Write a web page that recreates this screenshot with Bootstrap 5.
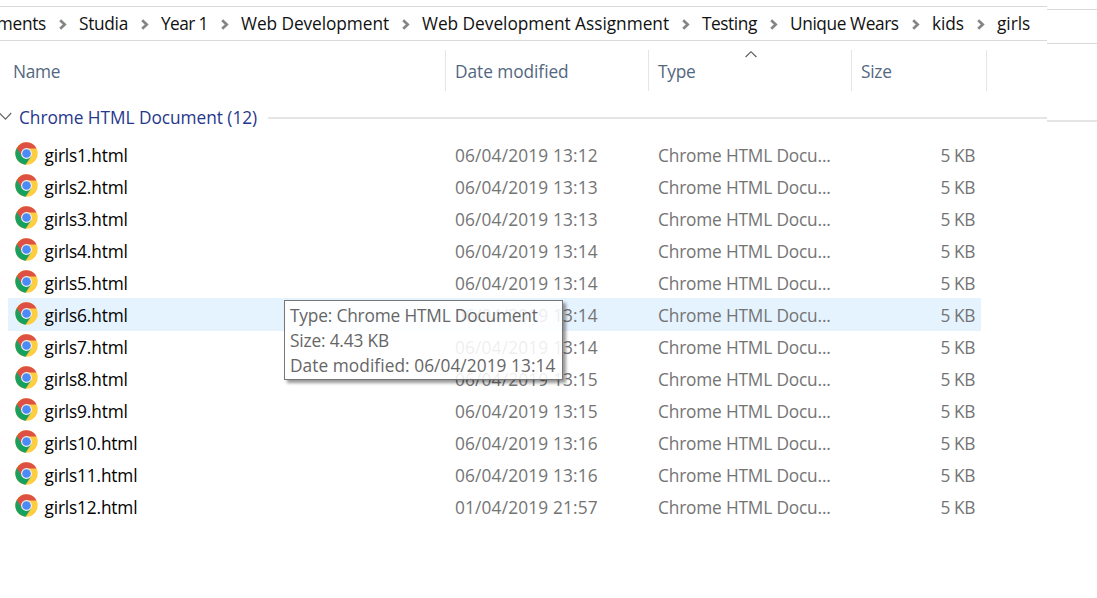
<!DOCTYPE html>
<html lang="en">
<head>
<meta charset="utf-8">
<title>girls</title>
<link href="https://cdn.jsdelivr.net/npm/bootstrap@5.3.0/dist/css/bootstrap.min.css" rel="stylesheet">
<style>
body{font-family:"Open Sans","Noto Sans",sans-serif;font-size:17.3px;font-weight:400;line-height:24px;background:#fff;color:#747474;height:598px;overflow:hidden;white-space:nowrap}
.address{padding-top:6px;height:41px}
.address-box{width:1047px;height:35px;border-top:1px solid #d9d9d9;border-bottom:1px solid #d9d9d9;color:#111}
.address-rest{height:35px;margin-top:3px;border-top:1px solid #d9d9d9;border-bottom:1px solid #d9d9d9}
.path{padding-top:5px}
.crumb{flex:none;width:var(--w);letter-spacing:var(--ls,0)}
.sep{flex:none;width:33px;height:24px;padding:7px 0 0 13px;line-height:0}
.heads{height:41px;margin-top:9px;color:#53677f}
.head{flex:none;border-right:1px solid #e5e5e5;padding:10px 0 0 9px;position:relative;letter-spacing:-.25px}
.c-name{width:446px}.c-date,.c-type{width:203px}.c-size{width:135px}
.head.c-name{padding-left:13px}
.head.c-date{letter-spacing:-.05px}
.sort{position:absolute;left:95.5px;top:0}
.group{height:26px;margin-top:14px;color:#26378c;margin-bottom:7px}
.group-title{width:249px;letter-spacing:-.04px;padding-top:1px}
.rule{height:2px;background:#e5e5e5;margin-top:12px}
.rule-end{width:50px;margin-top:15px}
.file{width:973px;height:32px;margin-left:8px;padding-left:6px;padding-top:4px;position:relative}
.file.hovered{background:#e5f3ff;box-shadow:0 1px #e5f3ff}
.file svg{flex:none;margin-top:-5px;margin-left:.5px}
.f-name{width:410.5px;margin-left:7px;color:#000;letter-spacing:-.16px}
.f-date{width:203px;letter-spacing:.16px}
.f-type{width:203px;letter-spacing:-.17px}
.f-size{width:114px;letter-spacing:-.4px}
.tip{position:absolute;left:284px;top:300px;width:279px;height:80px;border:1px solid #767676;background:rgba(255,255,255,.88);box-shadow:3px 3px 3px rgba(0,0,0,.4);padding:2px 0 0 5px;line-height:25px;color:#666;z-index:5}
.tip-type{letter-spacing:-.17px}.tip-date{letter-spacing:.06px}
</style>
</head>
<body>
<svg width="0" height="0" class="position-absolute">
  <symbol id="chrome" viewBox="0 0 48 48">
    <circle cx="24" cy="24" r="23.3" fill="#ffcd40"/>
    <path d="M24 24 3.8 12.3A23.3 23.3 0 0 0 22 47.3L34 29.5Z" fill="#17a05e"/>
    <path d="M24 13.5H44.8A23.3 23.3 0 0 0 3.8 12.3L14.5 29.5Z" fill="#dd5144"/>
    <circle cx="24" cy="24" r="11.3" fill="#f1f1f1"/>
    <circle cx="24" cy="24" r="9" fill="#4c8bf5"/>
  </symbol>
  <symbol id="next" viewBox="0 0 8 11"><path d="M1.2 1.2 5.7 5.5 1.2 9.8" fill="none" stroke="#858585" stroke-width="2.7"/></symbol>
</svg>

<nav class="address d-flex">
  <div class="address-box flex-shrink-0"><div class="path d-flex" id="path"></div></div>
  <div class="address-rest flex-fill"></div>
</nav>

<div class="heads d-flex">
  <div class="head c-name">Name</div>
  <div class="head c-date">Date modified</div>
  <div class="head c-type">Type
    <svg class="sort" width="12" height="9"><path d="M.6 7 6 1.7 11.4 7" fill="none" stroke="#555" stroke-width="1.1"/></svg>
  </div>
  <div class="head c-size">Size</div>
</div>

<div class="group d-flex">
  <svg class="flex-shrink-0" width="19" height="26"><path d="M-1 7.5 5.5 14.2 11.2 8" fill="none" stroke="#666" stroke-width="1.2"/></svg>
  <div class="group-title flex-shrink-0">Chrome HTML Document (12)</div>
  <div class="rule flex-fill"></div>
  <div class="rule rule-end flex-shrink-0"></div>
</div>

<main id="files"></main>

<div class="tip">
  <div class="tip-type">Type: Chrome HTML Document</div>
  <div class="tip-type">Size: 4.43 KB</div>
  <div class="tip-date">Date modified: 06/04/2019 13:14</div>
</div>

<script src="https://cdn.jsdelivr.net/npm/bootstrap@5.3.0/dist/js/bootstrap.bundle.min.js"></script>
<script>
const crumbs=[['ments',46,-.3],['Studia',49,-.3],['Year 1',47,-.6],['Web Development',148,-.07],['Web Development Assignment',247,-.03],['Testing',55,-.45],['Unique Wears',109,-.4],['kids',32,-.05],['girls',33,-.05]];
document.getElementById('path').innerHTML=crumbs.map(([t,w,ls],i)=>
  `<div class="crumb ${i?'':'d-flex justify-content-end'}" style="--w:${w}px;--ls:${ls}px">${t}</div>`).join('<span class="sep"><svg width="8" height="11"><use href="#next"/></svg></span>');
const times=['13:12','13:13','13:13','13:14','13:14','13:14','13:14','13:15','13:15','13:16','13:16','21:57'];
document.getElementById('files').innerHTML=times.map((t,i)=>
  `<div class="file d-flex align-items-center ${i==5?'hovered':''}"><svg width="23" height="23"><use href="#chrome"/></svg><div class="f-name">girls${i+1}.html</div><div class="f-date">${i==11?'01':'06'}/04/2019 ${t}</div><div class="f-type">Chrome HTML Docu...</div><div class="f-size text-end">5 KB</div></div>`).join('');
</script>
</body>
</html>
